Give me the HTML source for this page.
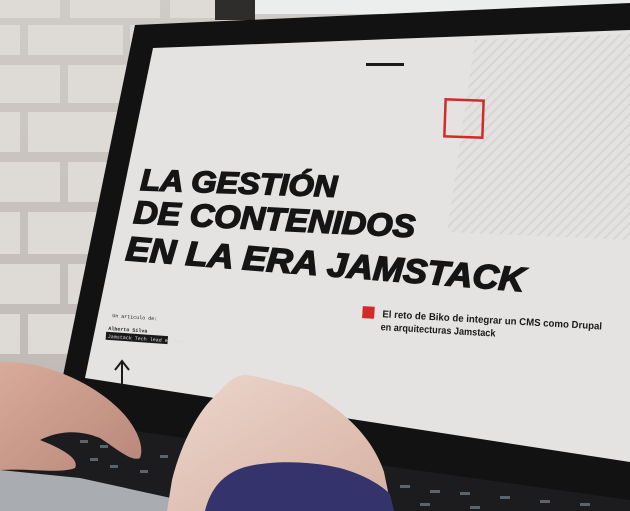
<!DOCTYPE html>
<html><head><meta charset="utf-8"><style>
html,body{margin:0;padding:0;width:630px;height:511px;overflow:hidden;background:#cfcac6}
svg{display:block}
</style></head><body>
<svg width="630" height="511" viewBox="0 0 630 511" xmlns="http://www.w3.org/2000/svg">
<defs>
<pattern id="hatch" width="7" height="7" patternUnits="userSpaceOnUse" patternTransform="rotate(45)">
<rect width="7" height="7" fill="#e4e2e1"/><rect width="2" height="7" fill="#d8d6d5"/></pattern>
<linearGradient id="wall" x1="0" y1="0" x2="0" y2="1"><stop offset="0" stop-color="#cfcbc7"/><stop offset="1" stop-color="#bbb5b0"/></linearGradient>
<linearGradient id="skin" x1="0" y1="0" x2="1" y2="1"><stop offset="0" stop-color="#ecd6cc"/><stop offset="1" stop-color="#d6b1a2"/></linearGradient>
<linearGradient id="skin2" x1="0" y1="0" x2="1" y2="1"><stop offset="0" stop-color="#d8ab9a"/><stop offset="1" stop-color="#b9877a"/></linearGradient>
</defs>
<rect width="630" height="511" fill="url(#wall)"/>
<g fill="#dedad6">
<rect x="0" y="0" width="60" height="18"/><rect x="70" y="0" width="90" height="18"/><rect x="170" y="0" width="50" height="18"/>
<rect x="0" y="25" width="20" height="30"/><rect x="28" y="25" width="95" height="30"/><rect x="130" y="25" width="70" height="22"/>
<rect x="0" y="65" width="60" height="38"/><rect x="68" y="65" width="70" height="38"/>
<rect x="0" y="112" width="20" height="40"/><rect x="28" y="112" width="100" height="40"/>
<rect x="0" y="162" width="60" height="40"/><rect x="68" y="162" width="50" height="40"/>
<rect x="0" y="212" width="20" height="42"/><rect x="28" y="212" width="80" height="42"/>
<rect x="0" y="264" width="60" height="40"/><rect x="68" y="264" width="30" height="40"/>
<rect x="0" y="314" width="20" height="40"/><rect x="28" y="314" width="60" height="40"/>
</g>
<rect x="215" y="0" width="40" height="20" fill="#2e2d2c"/>
<rect x="255" y="0" width="375" height="14" fill="#eceeee"/>
<polygon points="0,420 60,400 630,470 630,511 0,511" fill="#1c1c1e"/>
<polygon points="0,470 80,478 180,500 190,511 0,511" fill="#a9acb0"/>
<g fill="#6a7680" opacity="0.8">
<rect x="80" y="440" width="8" height="3"/><rect x="100" y="445" width="8" height="3"/><rect x="120" y="448" width="8" height="3"/><rect x="160" y="455" width="8" height="3"/><rect x="180" y="460" width="8" height="3"/><rect x="110" y="465" width="8" height="3"/><rect x="140" y="470" width="8" height="3"/><rect x="400" y="485" width="10" height="3"/><rect x="430" y="490" width="10" height="3"/><rect x="460" y="492" width="10" height="3"/><rect x="500" y="496" width="10" height="3"/><rect x="540" y="500" width="10" height="3"/><rect x="580" y="503" width="10" height="3"/><rect x="420" y="503" width="10" height="3"/><rect x="470" y="506" width="10" height="3"/><rect x="200" y="470" width="8" height="3"/><rect x="90" y="458" width="8" height="3"/>
</g>
<polygon points="135,25 630,3 630,500 55,420 58,400" fill="#121213"/>
<polygon points="153,48 630,30 630,462 85,378" fill="#e5e3e2"/>
<polygon points="475,40 630,34 630,240 447,232" fill="url(#hatch)"/>
<rect x="366" y="63" width="38" height="3" fill="#1a1a1a"/>
<rect x="445" y="100" width="38" height="37" fill="none" stroke="#d22a26" stroke-width="2.5" transform="rotate(2 464 118)"/>
<g font-family="Liberation Sans, sans-serif" font-weight="bold" font-style="italic" fill="#151515" stroke="#151515" stroke-width="1.5">
<text x="140" y="190" font-size="30" textLength="197" lengthAdjust="spacingAndGlyphs" transform="rotate(2 140 190)">LA GESTIÓN</text>
<text x="133" y="223" font-size="32" textLength="282" lengthAdjust="spacingAndGlyphs" transform="rotate(2.9 133 223)">DE CONTENIDOS</text>
<text x="125" y="260" font-size="34" textLength="400" lengthAdjust="spacingAndGlyphs" transform="rotate(4.5 125 260)">EN LA ERA JAMSTACK</text>
</g>
<g transform="rotate(3.2 360 320)" font-family="Liberation Sans, sans-serif" font-weight="bold" font-size="10" fill="#1a1a1a">
<rect x="362" y="306" width="12" height="12" fill="#d22a26"/>
<text x="382" y="316" textLength="220" lengthAdjust="spacingAndGlyphs">El reto de Biko de integrar un CMS como Drupal</text>
<text x="381" y="329" textLength="115" lengthAdjust="spacingAndGlyphs">en arquitecturas Jamstack</text>
</g>
<g transform="rotate(4 110 320)" font-family="Liberation Mono, monospace" font-size="5" fill="#222">
<text x="112" y="317">Un artículo de:</text>
<text x="109" y="330" font-weight="bold">Alberto Silva</text>
<rect x="107" y="332" width="62" height="8" fill="#1a1a1a"/>
<text x="109" y="338" fill="#ddd">Jamstack Tech lead en Biko</text>
</g>
<path d="M122,385 L122,362 M115,370 L122,361 L129,370" stroke="#1a1a1a" stroke-width="2" fill="none"/>
<path d="M0,362 C40,360 90,380 120,410 C135,425 145,445 140,458 C132,462 118,450 100,438 C80,430 60,430 40,440 C60,448 80,458 75,468 C60,474 30,468 0,470 Z" fill="url(#skin2)"/>
<path d="M167,511 L172,480 C182,440 200,410 213,398 C225,385 232,376 245,375 C262,376 280,384 295,386 C312,390 324,400 340,412 C360,428 376,448 384,472 L392,511 Z" fill="url(#skin)"/>
<path d="M205,511 C210,490 222,474 245,467 C272,460 310,461 340,468 C362,474 380,484 390,494 L394,511 Z" fill="#35336b"/>
</svg>
</body></html>
